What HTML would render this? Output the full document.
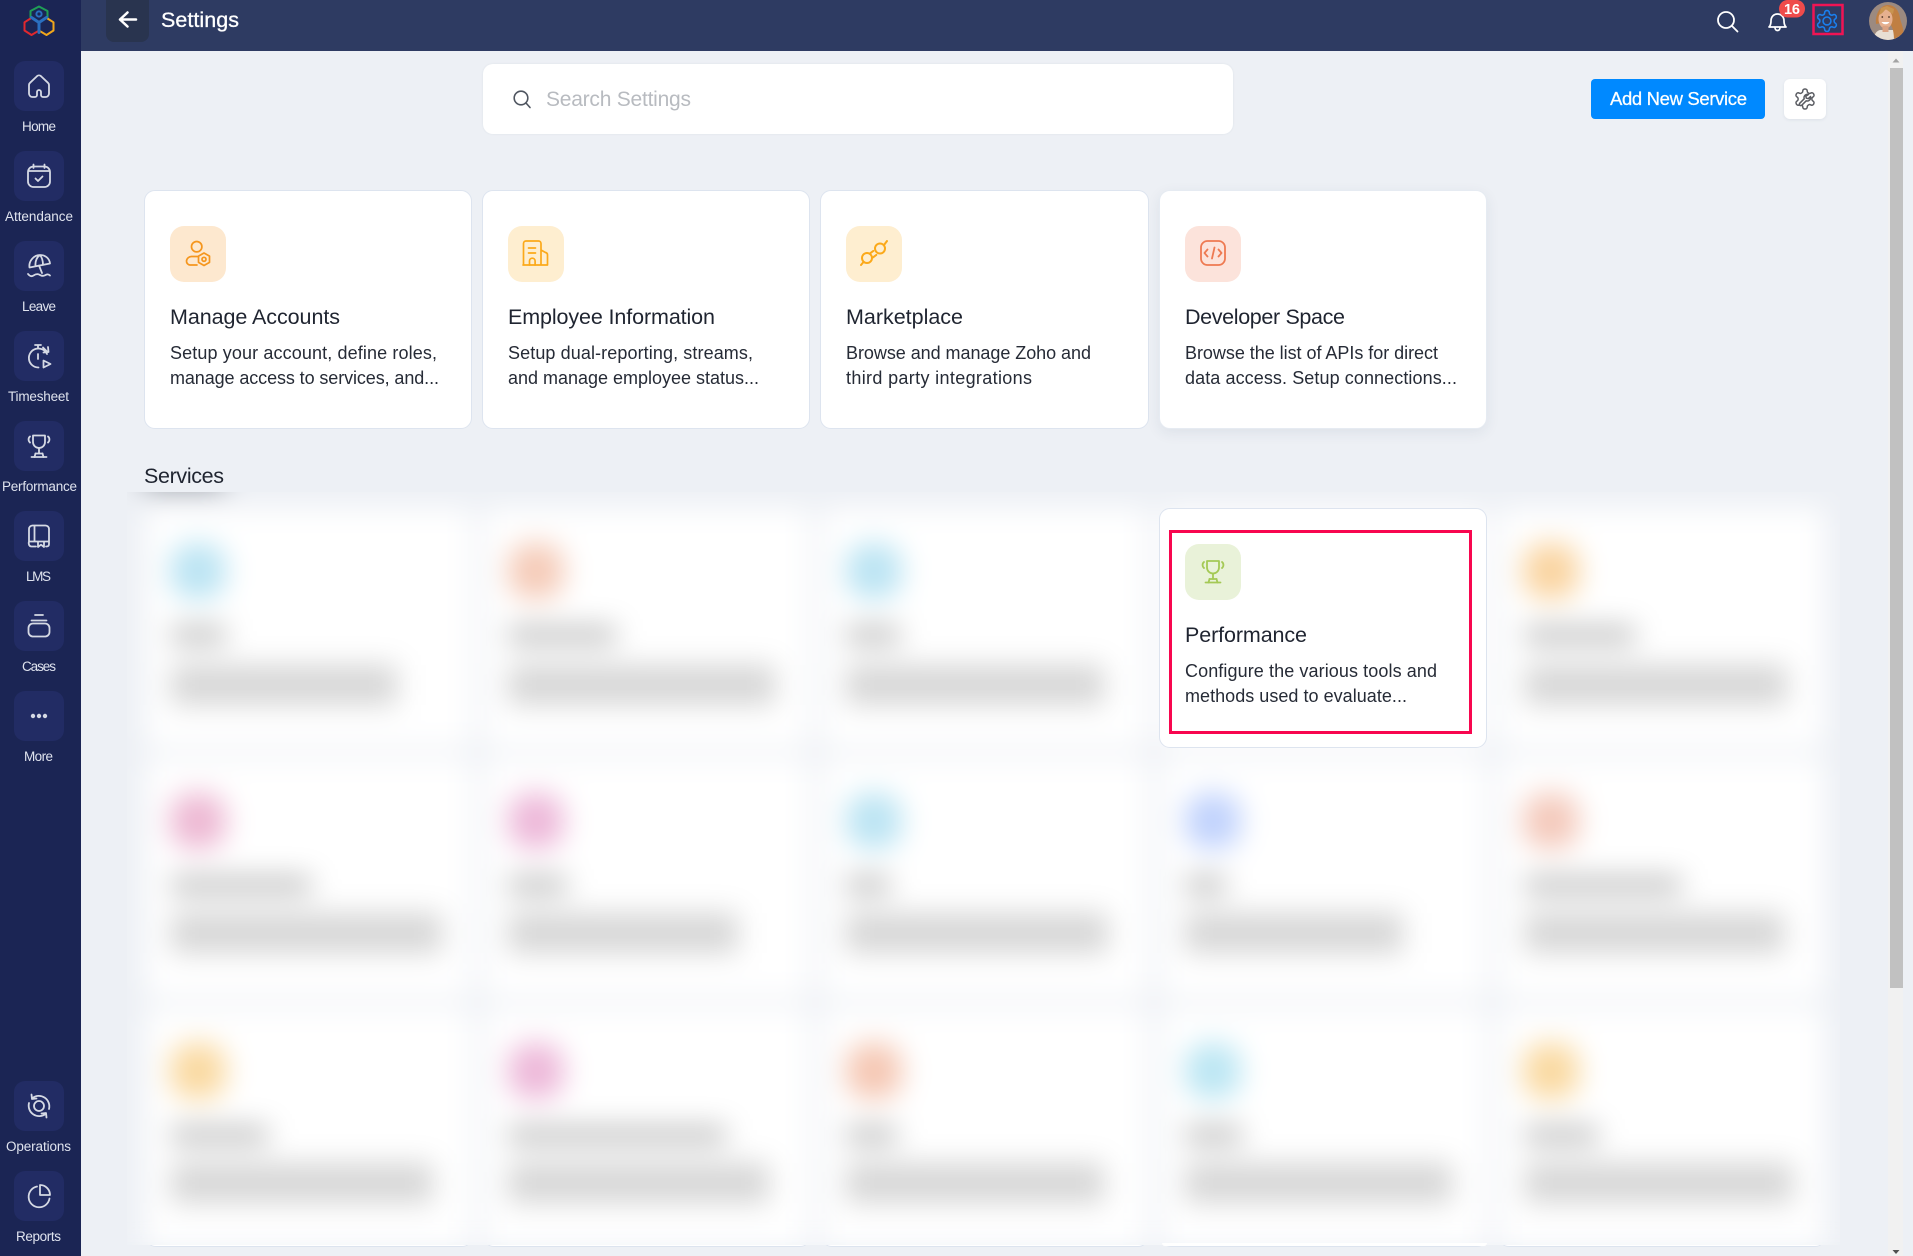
<!DOCTYPE html>
<html lang="en">
<head>
<meta charset="utf-8">
<title>Settings</title>
<style>
html,body{margin:0;padding:0;width:1913px;height:1256px;overflow:hidden;background:#edf0f5;font-family:"Liberation Sans",sans-serif}
.a{position:absolute;box-sizing:border-box}
.side{left:0;top:0;width:81px;height:1256px;background:#1b2554}
.tile{left:14px;width:50px;height:50px;border-radius:11px;background:#222c64}
.head{left:81px;top:0;width:1832px;height:51px;background:#2e3b62}
.back{left:106px;top:0;width:43px;height:42px;background:#29344f;border-radius:0 0 8px 8px}
.card{width:328px;height:239px;background:#fff;border:1px solid #dde4ef;border-radius:11px}
.ic{width:56px;height:56px;border-radius:14px}
svg text{font-family:"Liberation Sans",sans-serif}
.t{font-size:21.5px;fill:#1f2430}
.d{font-size:18px;fill:#262b36}
.l{font-size:13.5px;fill:#dfe3ee;text-anchor:start}
.i{fill:none;stroke:#d5d9e4;stroke-width:1.8;stroke-linecap:round;stroke-linejoin:round}
</style>
</head>
<body>
<!-- sharp row 3 under the blur so that bottoms peek through -->
<div class="a card" style="left:145px;top:1008px"></div>
<div class="a card" style="left:483px;top:1008px"></div>
<div class="a card" style="left:821px;top:1008px"></div>
<div class="a card" style="left:1160px;top:1008px"></div>
<div class="a card" style="left:1498px;top:1008px"></div>

<!-- blurred services -->
<div class="a" style="left:127px;top:492px;width:1713px;height:753px;overflow:hidden;background:#edf0f5">
<svg class="a" style="left:-127px;top:-492px;filter:blur(14px)" width="1913" height="1256" viewBox="0 0 1913 1256">
<rect width="1913" height="1256" fill="#edf0f5"/>
<rect x="144" y="468" width="80" height="18" fill="#787d87"/>
<g fill="#fff">
<rect x="145" y="508" width="327" height="239" rx="10"/><rect x="483" y="508" width="327" height="239" rx="10"/><rect x="821" y="508" width="327" height="239" rx="10"/><rect x="1160" y="508" width="327" height="239" rx="10"/><rect x="1498" y="508" width="327" height="239" rx="10"/>
<rect x="145" y="758" width="327" height="239" rx="10"/><rect x="483" y="758" width="327" height="239" rx="10"/><rect x="821" y="758" width="327" height="239" rx="10"/><rect x="1160" y="758" width="327" height="239" rx="10"/><rect x="1498" y="758" width="327" height="239" rx="10"/>
<rect x="145" y="1008" width="327" height="239" rx="10"/><rect x="483" y="1008" width="327" height="239" rx="10"/><rect x="821" y="1008" width="327" height="239" rx="10"/><rect x="1160" y="1008" width="327" height="239" rx="10"/><rect x="1498" y="1008" width="327" height="239" rx="10"/>
</g>
<!-- tiles -->
<g>
<rect x="170" y="543" width="56" height="56" rx="22" fill="#bbe4f3"/>
<rect x="508" y="543" width="56" height="56" rx="22" fill="#f5cbb8"/>
<rect x="846" y="543" width="56" height="56" rx="22" fill="#bbe4f3"/>
<rect x="1523" y="543" width="56" height="56" rx="22" fill="#fad4a0"/>
<rect x="170" y="793" width="56" height="56" rx="22" fill="#edb8d3"/>
<rect x="508" y="793" width="56" height="56" rx="22" fill="#edb8d9"/>
<rect x="846" y="793" width="56" height="56" rx="22" fill="#bbe4f3"/>
<rect x="1185" y="793" width="56" height="56" rx="22" fill="#c0d2fd"/>
<rect x="1523" y="793" width="56" height="56" rx="22" fill="#f4c9bb"/>
<rect x="170" y="1043" width="56" height="56" rx="22" fill="#fad9a0"/>
<rect x="508" y="1043" width="56" height="56" rx="22" fill="#edb8d9"/>
<rect x="846" y="1043" width="56" height="56" rx="22" fill="#f5c7b3"/>
<rect x="1185" y="1043" width="56" height="56" rx="22" fill="#bbe6f3"/>
<rect x="1523" y="1043" width="56" height="56" rx="22" fill="#fad9a0"/>
</g>
<!-- titles -->
<g fill="#b8b8b8">
<rect x="171" y="627" width="55" height="16"/><rect x="508" y="627" width="108" height="16"/><rect x="846" y="627" width="54" height="16"/><rect x="1525" y="627" width="110" height="16"/>
<rect x="171" y="877" width="140" height="16"/><rect x="508" y="877" width="59" height="16"/><rect x="846" y="877" width="44" height="16"/><rect x="1185" y="877" width="41" height="16"/><rect x="1525" y="877" width="156" height="16"/>
<rect x="171" y="1127" width="97" height="16"/><rect x="508" y="1127" width="218" height="16"/><rect x="846" y="1127" width="51" height="16"/><rect x="1185" y="1127" width="57" height="16"/><rect x="1525" y="1127" width="73" height="16"/>
</g>
<!-- descriptions -->
<g fill="#d6d6d6">
<rect x="171" y="665" width="226" height="40"/><rect x="508" y="665" width="267" height="40"/><rect x="846" y="665" width="258" height="40"/><rect x="1525" y="665" width="262" height="40"/>
<rect x="171" y="913" width="271" height="40"/><rect x="508" y="913" width="230" height="40"/><rect x="846" y="913" width="262" height="40"/><rect x="1185" y="913" width="218" height="40"/><rect x="1525" y="913" width="259" height="40"/>
<rect x="171" y="1163" width="262" height="40"/><rect x="508" y="1163" width="261" height="40"/><rect x="846" y="1163" width="258" height="40"/><rect x="1185" y="1163" width="267" height="40"/><rect x="1525" y="1163" width="268" height="40"/>
</g>
</svg>
</div>
<div class="a" style="left:1162px;top:1243px;width:325px;height:3px;background:#fff;border-radius:0 0 6px 6px"></div>

<div class="a side"></div>
<div class="a tile" style="top:61px"></div>
<div class="a tile" style="top:151px"></div>
<div class="a tile" style="top:241px"></div>
<div class="a tile" style="top:331px"></div>
<div class="a tile" style="top:421px"></div>
<div class="a tile" style="top:511px"></div>
<div class="a tile" style="top:601px"></div>
<div class="a tile" style="top:691px"></div>
<div class="a tile" style="top:1081px"></div>
<div class="a tile" style="top:1171px"></div>

<div class="a head"></div>
<div class="a back"></div>

<!-- search -->
<div class="a" style="left:483px;top:64px;width:750px;height:70px;background:#fff;border-radius:10px;box-shadow:0 0 2px rgba(40,60,90,.08)"></div>
<!-- buttons -->
<div class="a" style="left:1591px;top:79px;width:174px;height:40px;background:#0089ff;border-radius:4px"></div>
<div class="a" style="left:1784px;top:79px;width:42px;height:40px;background:#fff;border-radius:6px;box-shadow:0 1px 3px rgba(40,60,90,.08)"></div>

<!-- top cards -->
<div class="a card" style="left:144px;top:190px"></div>
<div class="a card" style="left:482px;top:190px"></div>
<div class="a card" style="left:820px;top:190px;width:329px"></div>
<div class="a card" style="left:1159px;top:190px;border-color:#e6ebf2;box-shadow:0 4px 14px rgba(40,60,90,.08)"></div>
<div class="a ic" style="left:170px;top:226px;background:#fde8cf"></div>
<div class="a ic" style="left:508px;top:226px;background:#feeed0"></div>
<div class="a ic" style="left:846px;top:226px;background:#feeed0"></div>
<div class="a ic" style="left:1185px;top:226px;background:#fce3db"></div>

<!-- performance card -->
<div class="a card" style="left:1159px;top:508px;height:240px"></div>
<div class="a" style="left:1169px;top:530px;width:303px;height:204px;border:3px solid #f8064f"></div>
<div class="a ic" style="left:1185px;top:544px;background:#e9f2d9"></div>

<!-- scrollbar -->
<div class="a" style="left:1888px;top:51px;width:15px;height:1205px;background:#f1f1f1"></div>
<div class="a" style="left:1890px;top:68px;width:13px;height:920px;background:#c1c1c1"></div>

<svg class="a" style="left:0;top:0" width="1913" height="1256" viewBox="0 0 1913 1256">
<defs>
<g id="trophy"><path d="M6 1.500h12v6.500a6 6 0 0 1-12 0z"/><path d="M12 14v5.500"/><path d="M8.500 19.500h7"/><path d="M4.500 23h15"/><path d="M8.500 19.500l-1 3.500M15.500 19.500l1 3.500"/><path d="M3 2.500C1 4 1.200 7 3 8.500"/><path d="M21 2.500C23 4 22.800 7 21 8.500"/></g>
<path id="gear" d="M12.220 2h-.44a2 2 0 0 0-2 2v.18a2 2 0 0 1-1 1.730l-.43.25a2 2 0 0 1-2 0l-.15-.08a2 2 0 0 0-2.730.73l-.22.38a2 2 0 0 0 .73 2.730l.15.1a2 2 0 0 1 1 1.720v.51a2 2 0 0 1-1 1.740l-.15.09a2 2 0 0 0-.73 2.730l.22.38a2 2 0 0 0 2.730.73l.15-.08a2 2 0 0 1 2 0l.43.25a2 2 0 0 1 1 1.730V20a2 2 0 0 0 2 2h.44a2 2 0 0 0 2-2v-.18a2 2 0 0 1 1-1.730l.43-.25a2 2 0 0 1 2 0l.15.08a2 2 0 0 0 2.730-.73l.22-.39a2 2 0 0 0-.73-2.730l-.15-.08a2 2 0 0 1-1-1.740v-.5a2 2 0 0 1 1-1.740l.15-.09a2 2 0 0 0 .73-2.730l-.22-.38a2 2 0 0 0-2.730-.73l-.15.08a2 2 0 0 1-2 0l-.43-.25a2 2 0 0 1-1-1.730V4a2 2 0 0 0-2-2z"/>
<clipPath id="av"><circle cx="1888" cy="21" r="19"/></clipPath>
</defs>

<!-- logo -->
<g fill="none" stroke-width="2" stroke-linejoin="round" stroke-linecap="round">
<path d="M30.500 17.500V11L39 6.500l8.500 4.500v6.500" stroke="#1f9e56"/>
<path d="M30.500 18.500l-6 3.800v8.200l7 4.500 7-4.200" stroke="#e0282e"/>
<path d="M47.500 18.500l6 3.800v8.200l-7 4.500-7-4.200" stroke="#f2a71b"/>
<path d="M31.500 17.500l7.500 5 7.500-5M39 22.500v10" stroke="#2a6fc0" stroke-width="3"/>
<circle cx="39" cy="14" r="2.600" stroke="#2a6fc0"/>
</g>

<!-- sidebar icons -->
<g class="i">
<g transform="translate(27 74)"><path d="M5.500 23H8a2 2 0 0 0 2-2v-3a2 2 0 0 1 4 0v3a2 2 0 0 0 2 2h2.500a3.500 3.500 0 0 0 3.500-3.500V11a3 3 0 0 0-1-2.200L13.800 2a2.800 2.800 0 0 0-3.600 0L3 8.800A3 3 0 0 0 2 11v8.500A3.500 3.500 0 0 0 5.500 23z"/></g>
<g transform="translate(27 164)"><rect x="1" y="2.500" width="22" height="20.500" rx="5.500"/><path d="M6.500 .5v3.500M17.500 .5v3.500M1.500 7h21M8.500 14.500l2.500 2.500 4.500-4.500"/></g>
<g transform="translate(27 254)"><path d="M2.500 13.500C1.500 7 7 1 13 1c5.500 0 9.500 3.500 10 8.500zM8.500 11.800C8 7 10 3 13 1c2 2.500 3 5 3 10M12 11.500l3 7.500"/><path d="M1 20c2 2.500 4 2.500 5.500 1.500s3.500-2 5.500-1 3.500 2 5.500 1 3.500-2 5.500 0"/></g>
<g transform="translate(27 344)"><path d="M8 1h6M11 1v3.500M20 10a9.500 9.500 0 1 0-8.500 13.500M16 3.500l4 4M21 3l.5 5-5 .5M11 10v5"/><path d="M16.500 16.500l7 3.500-7 3.500z"/></g>
<g transform="translate(27 434)"><use href="#trophy"/></g>
<g transform="translate(27 524)"><path d="M2 17.500V5a3.500 3.500 0 0 1 3.500-3.500h13A3.500 3.500 0 0 1 22 5v15M7.500 1.500v16M2 17.500h20M2 17.500c-.8 2 0 5 2.500 5H9M22 20c0 1.800-.8 2.500-2.500 2.500H19M11 18v5l3-2.300L17 23v-5"/></g>
<g transform="translate(27 614)"><path d="M8 1h8M4.500 6.500h15"/><path d="M1.500 14a4.500 4.500 0 0 1 4.500-4.500h12a4.500 4.500 0 0 1 4.500 4.500v4a4.500 4.500 0 0 1-4.500 4.500H6A4.500 4.500 0 0 1 1.500 18z"/></g>
<g transform="translate(27 1094)"><circle cx="12" cy="12" r="5"/><path d="M5.500 4A10.500 10.500 0 0 1 22 15M18.500 20A10.500 10.500 0 0 1 2 9M4.500 .5L5 5l4.500-.5M19.500 23.500L19 19l-4.500.5"/></g>
<g transform="translate(27 1184)"><path d="M13 1a10 10 0 0 1 10 10H13z"/><path d="M10 2.500A10.500 10.500 0 1 0 22.500 14.500"/></g>
</g>
<g fill="#d5d9e4"><circle cx="33" cy="716" r="2.200"/><circle cx="39" cy="716" r="2.200"/><circle cx="45" cy="716" r="2.200"/></g>

<!-- sidebar labels -->
<text class="l" x="22" y="131" textLength="34">Home</text>
<text class="l" x="5" y="221" textLength="68">Attendance</text>
<text class="l" x="22" y="311" textLength="34">Leave</text>
<text class="l" x="8" y="401" textLength="61">Timesheet</text>
<text class="l" x="2" y="491" textLength="75">Performance</text>
<text class="l" x="26" y="581" textLength="25">LMS</text>
<text class="l" x="22" y="671" textLength="34">Cases</text>
<text class="l" x="24" y="761" textLength="29">More</text>
<text class="l" x="6" y="1151" textLength="65">Operations</text>
<text class="l" x="16" y="1241" textLength="45">Reports</text>

<!-- header -->
<path d="M136 19.500H120M127.500 12.500l-7.500 7 7.500 7" fill="none" stroke="#fff" stroke-width="2.500" stroke-linecap="round" stroke-linejoin="round"/>
<text x="161" y="27" font-size="21.500" fill="#fff" stroke="#fff" stroke-width=".3" textLength="78">Settings</text>
<circle cx="1726" cy="20" r="8" fill="none" stroke="#fff" stroke-width="1.800"/>
<path d="M1732 26l5.500 5.500" stroke="#fff" stroke-width="1.800" stroke-linecap="round"/>
<path d="M1769 27c1.500-1.500 2-3 2-6 0-4 2.500-7 6.500-7s6.500 3 6.500 7c0 3 .5 4.500 2 6zM1775 27.500c0 4 5 4 5 0" fill="none" stroke="#fff" stroke-width="1.700" stroke-linejoin="round"/>
<rect x="1779" y="0" width="26" height="17.500" rx="8.700" fill="#ef4b4b"/>
<text x="1784" y="14" font-size="14.500" font-weight="bold" fill="#fff" textLength="16">16</text>
<rect x="1813.500" y="5" width="29" height="29" fill="none" stroke="#f01454" stroke-width="2.500"/>
<g transform="translate(1814.500 8.500) scale(1.040)" fill="none" stroke="#1a80f0" stroke-width="1.500"><use href="#gear"/><circle cx="12" cy="12" r="3.800"/></g>

<!-- avatar -->
<g clip-path="url(#av)">
<rect x="1869" y="2" width="38" height="38" fill="#9c8a80"/>
<path d="M1874 40c0-7 3-9 6-10l14 0c3 1 6 3 6 10z" fill="#e8dfd4"/>
<path d="M1876 24c-1-11 5-19 12-19s11 6 12 13c1 6 5 11 3 22h-9c0-6-1-13-4-16l-8-1z" fill="#c07f42"/>
<ellipse cx="1885.500" cy="19" rx="7" ry="9.500" fill="#e6b08f"/>
<rect x="1882.500" y="26" width="6" height="6" fill="#dca383"/>
<path d="M1881.500 22c2 3 6 3 8 0z" fill="#fff"/>
<path d="M1879 15c3-1 5-4 7-6 2 2 5 4 7 5l1-5-7-3-6 2z" fill="#c99450"/>
<circle cx="1882.300" cy="17" r=".9" fill="#4a3325"/><circle cx="1889" cy="17" r=".9" fill="#4a3325"/>
</g>

<!-- search box -->
<circle cx="521" cy="98" r="6.800" fill="none" stroke="#4f5560" stroke-width="1.600"/>
<path d="M526 103l4 4.500" stroke="#4f5560" stroke-width="1.600" stroke-linecap="round"/>
<text x="546" y="106" font-size="21" fill="#b8bbc0" textLength="145">Search Settings</text>

<!-- add new service -->
<text x="1610" y="105" font-size="18.500" fill="#fff" stroke="#fff" stroke-width=".25" textLength="137">Add New Service</text>
<g transform="translate(1793 87)" fill="none" stroke="#5a5c62" stroke-width="1.500" stroke-linecap="round" stroke-linejoin="round"><use href="#gear"/><path d="M15.500 7.500a3.400 3.400 0 0 0-4.300 4.300L6.800 16.200a1.400 1.400 0 0 0 2 2l4.400-4.400a3.400 3.400 0 0 0 4.300-4.300l-2.200 2.200-2-.5-.5-2z" fill="#fff"/></g>

<!-- card text -->
<text class="t" x="170" y="324" textLength="170">Manage Accounts</text>
<text class="d" x="170" y="359" textLength="267">Setup your account, define roles,</text>
<text class="d" x="170" y="384" textLength="269">manage access to services, and...</text>

<text class="t" x="508" y="324" textLength="207">Employee Information</text>
<text class="d" x="508" y="359" textLength="245">Setup dual-reporting, streams,</text>
<text class="d" x="508" y="384" textLength="251">and manage employee status...</text>

<text class="t" x="846" y="324" textLength="117">Marketplace</text>
<text class="d" x="846" y="359" textLength="245">Browse and manage Zoho and</text>
<text class="d" x="846" y="384" textLength="186">third party integrations</text>

<text class="t" x="1185" y="324" textLength="160">Developer Space</text>
<text class="d" x="1185" y="359" textLength="253">Browse the list of APIs for direct</text>
<text class="d" x="1185" y="384" textLength="272">data access. Setup connections...</text>

<text x="144" y="483" font-size="21.500" fill="#1f2430" textLength="80">Services</text>

<text class="t" x="1185" y="642" textLength="122">Performance</text>
<text class="d" x="1185" y="677" textLength="252">Configure the various tools and</text>
<text class="d" x="1185" y="702" textLength="222">methods used to evaluate...</text>

<!-- card icons -->
<g fill="none" stroke="#f5961e" stroke-width="1.700" stroke-linecap="round" stroke-linejoin="round">
<circle cx="196.700" cy="246.700" r="5.200"/>
<path d="M197.500 256.500H192a5 5 0 0 0-5.500 4.500 3.800 3.800 0 0 0 3.500 4H197"/>
<path d="M204 253l5.500 3.100v6.300l-5.500 3.100-5.500-3.100v-6.300z"/>
<circle cx="204" cy="259.300" r="2"/>
</g>
<g fill="none" stroke="#fba91a" stroke-width="1.700" stroke-linecap="round" stroke-linejoin="round">
<path d="M523.500 265v-21.500a2.500 2.500 0 0 1 2.500-2.500h12.500a2.500 2.500 0 0 1 2.500 2.500V265zM541 250l4.500 2.500a2.500 2.500 0 0 1 2 2.500v10H523"/>
<path d="M528.500 248h7M528.500 253h7M529.500 265v-4a2.800 2.800 0 0 1 5.600 0v4"/>
</g>
<g fill="none" stroke="#fba91a" stroke-width="2" stroke-linecap="round" stroke-linejoin="round">
<circle cx="867" cy="258" r="5"/><circle cx="880" cy="248.500" r="5"/>
<path d="M861 265l2.500-3M887 241l-3 4M873.100 257.300l3.200-2.400M870.100 253.300l3.200-2.400"/>
</g>
<g fill="none" stroke="#ee7a52" stroke-width="1.800" stroke-linecap="round" stroke-linejoin="round">
<rect x="1201" y="241" width="24" height="24" rx="6.500"/>
<path d="M1207.500 249.500l-3 3.500 3 3.500M1218.500 249.500l3 3.500-3 3.500M1214.500 247.500l-2.500 11"/>
</g>
<g transform="translate(1201 559.500)" fill="none" stroke="#a4c955" stroke-width="1.800" stroke-linecap="round" stroke-linejoin="round"><use href="#trophy"/></g>

<!-- scroll arrows -->
<path d="M1892.500 62.500h7l-3.500-4z" fill="#a3a3a3"/>
<path d="M1892.500 1250h7l-3.500 4z" fill="#505050"/>
</svg>
</body>
</html>
